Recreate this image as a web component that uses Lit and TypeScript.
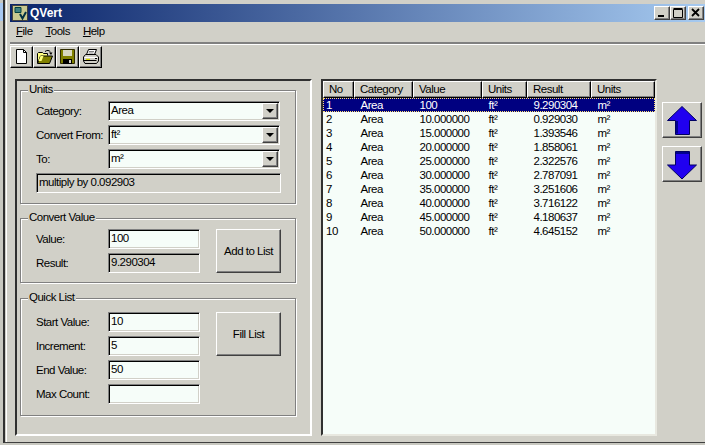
import { LitElement, css, html, svg } from 'lit'
import { customElement } from 'lit/decorators.js'

const rows = [
  ['1', 'Area', '100', 'ft²', '9.290304', 'm²'],
  ['2', 'Area', '10.000000', 'ft²', '0.929030', 'm²'],
  ['3', 'Area', '15.000000', 'ft²', '1.393546', 'm²'],
  ['4', 'Area', '20.000000', 'ft²', '1.858061', 'm²'],
  ['5', 'Area', '25.000000', 'ft²', '2.322576', 'm²'],
  ['6', 'Area', '30.000000', 'ft²', '2.787091', 'm²'],
  ['7', 'Area', '35.000000', 'ft²', '3.251606', 'm²'],
  ['8', 'Area', '40.000000', 'ft²', '3.716122', 'm²'],
  ['9', 'Area', '45.000000', 'ft²', '4.180637', 'm²'],
  ['10', 'Area', '50.000000', 'ft²', '4.645152', 'm²'],
]
const columns = ['No', 'Category', 'Value', 'Units', 'Result', 'Units']

const newIcon = svg`<path d="M2.500 0.500h7l3 3v11h-10z" fill="#fff" stroke="#000"/><path d="M9.500 0.500v3h3" fill="none" stroke="#000"/>`
const openIcon = svg`
  <path d="M0.500 14V4.500l1-1h4l1 1h4v2" fill="#ffff80" stroke="#000"/>
  <path d="M0.500 14.500l3-7.500h12l-3 7.500z" fill="#808000" stroke="#000"/>
  <path d="M1.500 12l2-5h3l-2 5z" fill="#ffff80"/>
  <path d="M8 2.500c2-1.500 4-1.500 5.500 0.500" fill="none" stroke="#000"/>
  <path d="M12 3.500h3.500l-1.500 2.500z" fill="#000"/>`
const saveIcon = svg`
  <path d="M0.500 0.500h14v14h-14z" fill="#808000" stroke="#302c00"/>
  <path d="M3 1h9v6H3z" fill="#d8d8c0"/>
  <path d="M3 10h9v5H3z" fill="#000"/>
  <path d="M9 11h2v3H9z" fill="#d4d0c8"/>`
const printIcon = svg`
  <path d="M5.500 0.500h8l-2 5h-8z" fill="#fff" stroke="#000"/>
  <path d="M6 2.500h5M5.500 4h5" stroke="#808080"/>
  <path d="M0.500 8l2-2.500h10.500l2.500 2.500v4l-2 2.500h-11.500l-1.500-2.500z" fill="#d1d0c8" stroke="#000"/>
  <path d="M1.500 8.500h13" stroke="#fff"/>
  <path d="M3 10.500h4" stroke="#d8d800" stroke-width="1.500"/>
  <path d="M0.500 11.500h13" stroke="#000"/>
  <path d="M12 9.500h2" stroke="#000"/>`

@customElement('app-root')
export class AppRoot extends LitElement {
  renderCombo(value: string) {
    return html`
      <div class="field combo">
        <span class="value">${value}</span>
        <span class="drop"><i></i></span>
      </div>
    `
  }

  renderInput(label: string, value: string, readonly = false) {
    return html`
      <div class="row">
        <label>${label}</label>
        <div class="field short ${readonly ? 'readonly' : ''}"><span class="value">${value}</span></div>
      </div>
    `
  }

  renderTool(icon: unknown) {
    return html`<button class="tool"><svg width="16" height="16" viewBox="0 0 16 16">${icon}</svg></button>`
  }

  render() {
    return html`
      <div class="window">
        <div class="title">
          <svg class="app-icon" width="16" height="16" viewBox="0 0 16 16">
            <rect x="0.500" y="0.500" width="15" height="15" fill="#c8c890" stroke="#404040"/>
            <path d="M3 2.500h6v5H3z" fill="#408080" stroke="#004040"/>
            <path d="M8 9l2.500 4.500L14 7" fill="none" stroke="#003040" stroke-width="2"/>
          </svg>
          <span class="title-text">QVert</span>
          <div class="caption">
            <button class="cap"><svg width="10" height="10" viewBox="0 0 10 10"><path d="M1 7h6v2H1z"/></svg></button>
            <button class="cap"><svg width="10" height="10" viewBox="0 0 10 10"><path d="M0.500 1.500h9v8h-9zM0.500 0.500h9" fill="none" stroke="#000"/></svg></button>
            <button class="cap close"><svg width="10" height="10" viewBox="0 0 10 10"><path d="M1 1l7 7M8 1L1 8" stroke="#000" stroke-width="1.800"/></svg></button>
          </div>
        </div>
        <div class="menu">
          <span><u>F</u>ile</span>
          <span><u>T</u>ools</span>
          <span><u>H</u>elp</span>
        </div>
        <div class="toolbar">
          ${this.renderTool(newIcon)}
          ${this.renderTool(openIcon)}
          ${this.renderTool(saveIcon)}
          ${this.renderTool(printIcon)}
        </div>
        <div class="main">
          <div class="panel">
            <section class="group units">
              <span class="legend">Units</span>
              <div class="row"><label>Category:</label>${this.renderCombo('Area')}</div>
              <div class="row"><label>Convert From:</label>${this.renderCombo('ft²')}</div>
              <div class="row"><label>To:</label>${this.renderCombo('m²')}</div>
              <div class="field readonly factor"><span class="value">multiply by 0.092903</span></div>
            </section>
            <section class="group convert">
              <span class="legend">Convert Value</span>
              <div class="split">
                <div class="stack">
                  ${this.renderInput('Value:', '100')}
                  ${this.renderInput('Result:', '9.290304', true)}
                </div>
                <button class="action tall">Add to List</button>
              </div>
            </section>
            <section class="group quick">
              <span class="legend">Quick List</span>
              <div class="split">
                <div class="stack">
                  ${this.renderInput('Start Value:', '10')}
                  ${this.renderInput('Increment:', '5')}
                  ${this.renderInput('End Value:', '50')}
                  ${this.renderInput('Max Count:', '')}
                </div>
                <button class="action tall">Fill List</button>
              </div>
            </section>
          </div>
          <div class="list">
            <div class="grid head">
              ${columns.map((c) => html`<div class="th">${c}</div>`)}
            </div>
            ${rows.map(
              (r, i) => html`
                <div class="grid item ${i === 0 ? 'selected' : ''}">
                  ${r.map((c) => html`<div class="td">${c}</div>`)}
                </div>
              `
            )}
          </div>
          <div class="arrows">
            <button class="arrow">
              <svg width="31" height="31" viewBox="0 0 31 31">
                <path d="M15 1.500L29.500 15.500H22.500V29.500H8.500V15.500H0.500z" fill="#2000f0" stroke="#000060"/>
                <path d="M10 16v12.500" stroke="#000090" stroke-width="2"/>
              </svg>
            </button>
            <button class="arrow">
              <svg width="31" height="31" viewBox="0 0 31 31">
                <path d="M15 30L29.500 16H22.500V2.500H8.500V16H0.500z" fill="#2000f0" stroke="#000060"/>
                <path d="M9 4h13" stroke="#000090" stroke-width="2"/>
              </svg>
            </button>
          </div>
        </div>
      </div>
    `
  }

  static styles = css`
    :host {
      display: block;
      width: 705px;
      height: 445px;
      overflow: hidden;
      box-sizing: border-box;
      padding-left: 3px;
      background: linear-gradient(#a8c8f0, #a8c8f0) 0 3px / 3px 18px no-repeat, #c8c8c0;
      font-family: 'Liberation Sans', Arial, sans-serif;
      font-size: 11.5px;
      letter-spacing: -0.5px;
      color: #000;
    }
    * {
      box-sizing: border-box;
    }
    button {
      font: inherit;
      letter-spacing: inherit;
      color: inherit;
      padding: 0;
      appearance: none;
      background: #d1d0c8;
      border: 1px solid;
      border-color: #fff #404040 #404040 #fff;
      box-shadow: inset -1px -1px #808080;
      display: flex;
      align-items: center;
      justify-content: center;
    }
    .window {
      height: 443px;
      width: 702px;
      padding: 4px 0 0 5px;
      background: #d1d0c8;
      border-left: 2px solid #303030;
      box-shadow: inset 1px 0 #d1d0c8, inset 2px 0 #fff;
      border-bottom: 1px solid #404040;
    }
    .title {
      height: 18px;
      display: flex;
      align-items: center;
      padding-left: 2px;
      background: linear-gradient(90deg, #0a246a, #a6caf0);
    }
    .app-icon {
      margin-right: 2px;
    }
    .title-text {
      color: #fff;
      font-weight: 700;
      font-size: 12px;
      letter-spacing: 0;
    }
    .caption {
      margin-left: auto;
      display: flex;
    }
    .cap {
      width: 16px;
      height: 14px;
    }
    .close {
      margin-left: 2px;
      margin-right: 1px;
    }
    .menu {
      height: 22px;
      display: flex;
      align-items: center;
      gap: 13px;
      padding: 0 0 2px 6px;
      border-bottom: 2px solid #808080;
      box-shadow: 0 1px #fff;
    }
    .toolbar {
      display: flex;
      height: 24px;
      padding-top: 2px;
    }
    .tool {
      width: 23px;
      height: 22px;
      border-color: #fff #000 #000 #fff;
    }
    .main {
      display: flex;
      align-items: flex-start;
      padding: 11px 0 0 5px;
    }
    .panel {
      width: 297px;
      height: 357px;
      padding: 9px 0 0 3px;
      border: 2px solid;
      border-color: #303030 #fff #fff #303030;
      display: flex;
      flex-direction: column;
    }
    .group {
      position: relative;
      width: 276px;
      padding: 10px 0 0 15px;
      border: 1px solid #808080;
      box-shadow: 1px 1px #fff, inset 1px 1px #fff;
    }
    .legend {
      position: absolute;
      left: 7px;
      top: -8px;
      padding: 0 1px;
      background: #d1d0c8;
      line-height: 13px;
    }
    .units {
      height: 114px;
    }
    .convert {
      height: 65px;
      margin-top: 14px;
    }
    .quick {
      height: 118px;
      margin-top: 15px;
      padding-top: 13px;
    }
    .row {
      display: flex;
      align-items: center;
      height: 20px;
      margin-bottom: 4px;
    }
    label {
      width: 72px;
      white-space: nowrap;
      margin-bottom: 1px;
    }
    .field {
      height: 20px;
      display: flex;
      align-items: center;
      background: #f6fdf9;
      border: 1px solid;
      border-color: #808080 #fff #fff #808080;
      box-shadow: inset 1px 1px #000, inset -1px -1px #d1d0c8;
      padding-left: 2px;
    }
    .value {
      line-height: 14px;
      margin-bottom: 3px;
    }
    .combo {
      width: 172px;
    }
    .drop {
      margin-left: auto;
      margin-right: 1px;
      width: 16px;
      height: 16px;
      background: #d1d0c8;
      border: 1px solid;
      border-color: #fff #404040 #404040 #fff;
      box-shadow: inset -1px -1px #808080;
      display: flex;
      align-items: center;
      justify-content: center;
    }
    .drop i {
      width: 0;
      height: 0;
      border: 4px solid transparent;
      border-top: 4px solid #000;
      border-bottom: 0;
    }
    .readonly {
      background: #d1d0c8;
    }
    .factor {
      width: 245px;
    }
    .short {
      width: 92px;
    }
    .split {
      display: flex;
      gap: 16px;
      align-items: flex-start;
    }
    .stack {
      width: 164px;
    }
    .action {
      width: 65px;
    }
    .tall {
      height: 44px;
    }
    .list {
      width: 336px;
      height: 357px;
      margin-left: 9px;
      border: 2px solid;
      border-color: #303030 #e8e8e0 #e8e8e0 #303030;
      background: #f6fdf9;
    }
    .grid {
      display: grid;
      grid-template-columns: 31px 59px 69px 45px 64px 64px;
      width: 332px;
    }
    .head {
      height: 17px;
    }
    .th {
      padding-left: 5px;
      line-height: 15px;
      background: #d1d0c8;
      border: 1px solid;
      border-color: #fff #000 #000 #fff;
      box-shadow: inset -1px -1px #808080;
    }
    .item {
      height: 14px;
      line-height: 14px;
    }
    .td {
      padding-left: 6.5px;
    }
    .td:first-child {
      padding-left: 3px;
    }
    .selected {
      background: #000080;
      color: #fff;
      outline: 1px dotted #ffe070;
      outline-offset: -1px;
    }
    .arrows {
      margin-left: 5px;
      padding-top: 23px;
      display: flex;
      flex-direction: column;
      gap: 8px;
    }
    .arrow {
      width: 40px;
      height: 36px;
    }
    .arrow svg {
      margin-left: 1px;
    }
  `
}
